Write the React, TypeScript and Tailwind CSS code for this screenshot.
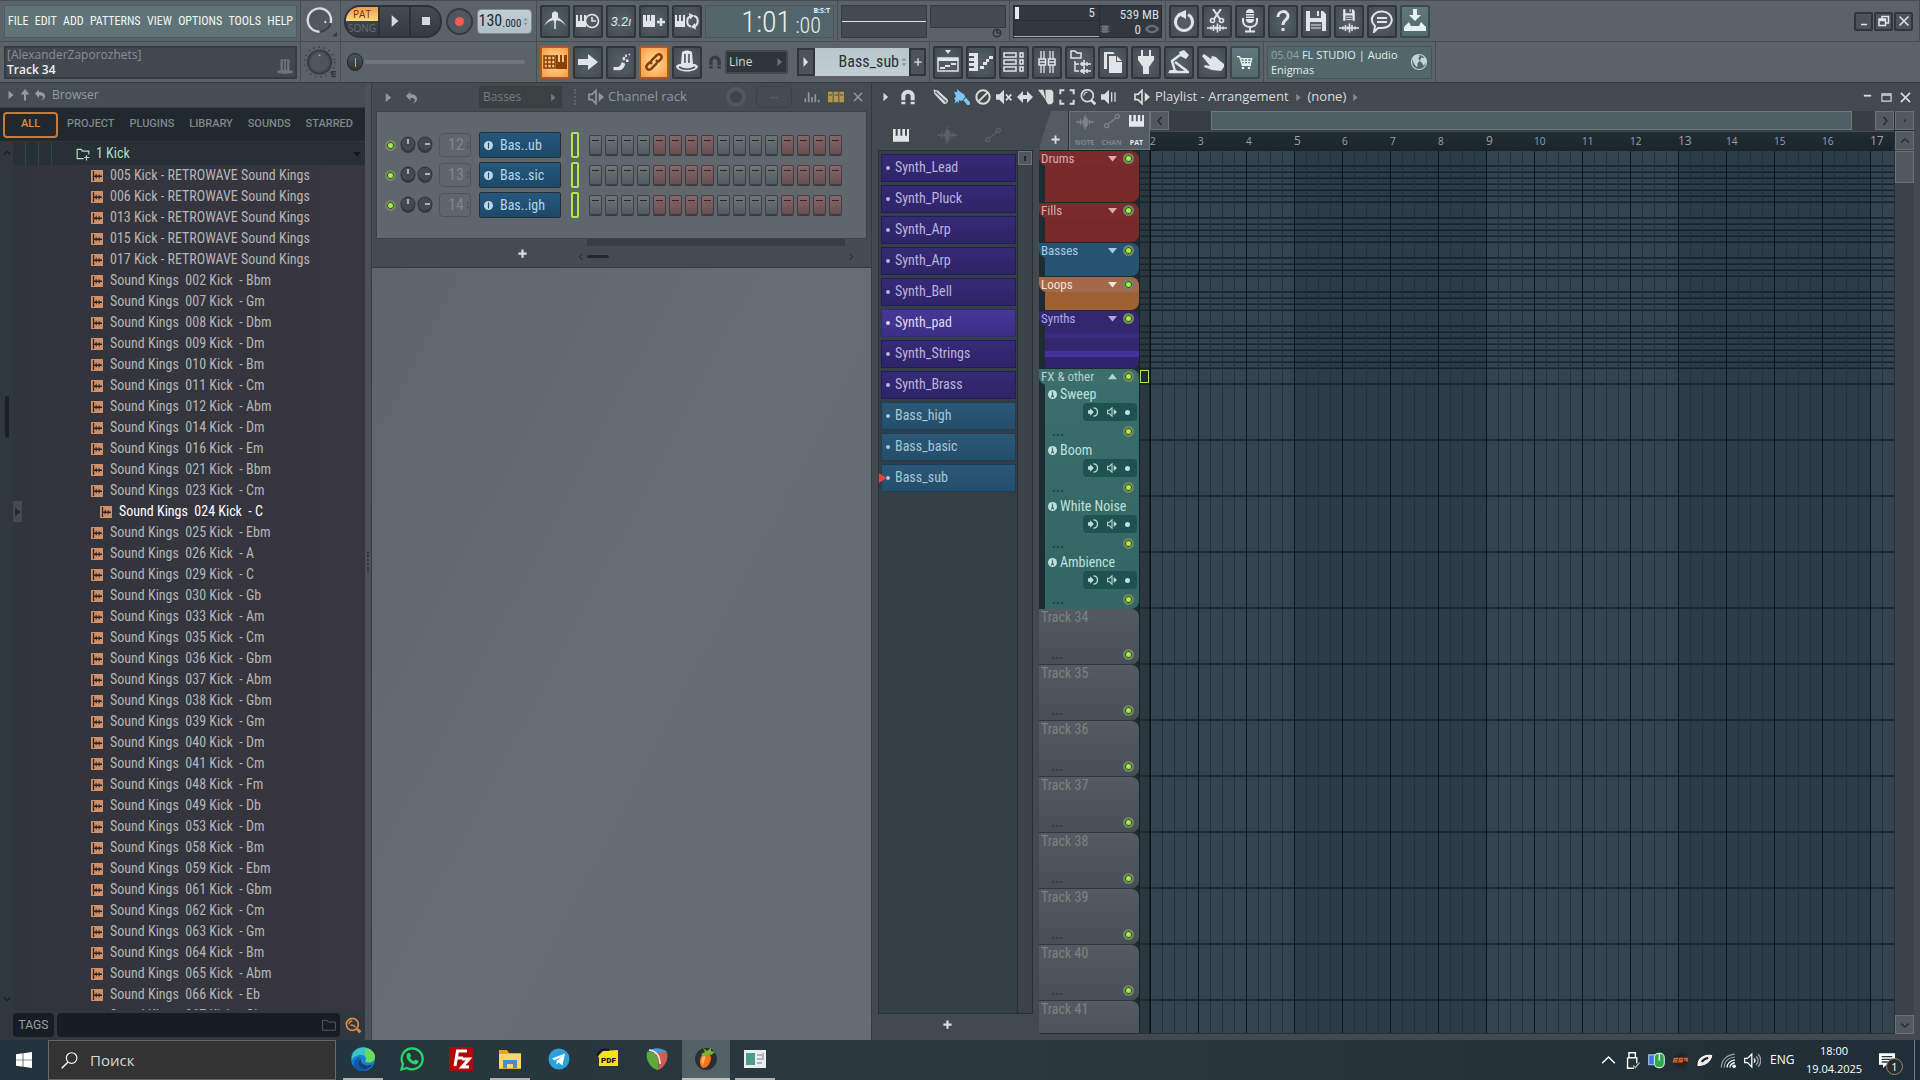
import type { ReactNode } from "react";

const KICKS = [
  "005 Kick - RETROWAVE Sound Kings",
  "006 Kick - RETROWAVE Sound Kings",
  "013 Kick - RETROWAVE Sound Kings",
  "015 Kick - RETROWAVE Sound Kings",
  "017 Kick - RETROWAVE Sound Kings",
  ...[
    ["002", "Bbm"], ["007", "Gm"], ["008", "Dbm"], ["009", "Dm"], ["010", "Bm"], ["011", "Cm"],
    ["012", "Abm"], ["014", "Dm"], ["016", "Em"], ["021", "Bbm"], ["023", "Cm"], ["024", "C"],
    ["025", "Ebm"], ["026", "A"], ["029", "C"], ["030", "Gb"], ["033", "Am"], ["035", "Cm"],
    ["036", "Gbm"], ["037", "Abm"], ["038", "Gbm"], ["039", "Gm"], ["040", "Dm"], ["041", "Cm"],
    ["048", "Fm"], ["049", "Db"], ["053", "Dm"], ["058", "Bm"], ["059", "Ebm"], ["061", "Gbm"],
    ["062", "Cm"], ["063", "Gm"], ["064", "Bm"], ["065", "Abm"], ["066", "Eb"], ["067", "Gb"],
  ].map(([n, key]) => `Sound Kings  ${n} Kick  - ${key}`),
];

const SELECTED_KICK = "Sound Kings  024 Kick  - C";

const CHANNELS = [
  { num: 12, name: "Bas..ub" },
  { num: 13, name: "Bas..sic" },
  { num: 14, name: "Bas..igh" },
];

const SYNTH = "border-[#241b58] bg-linear-to-b from-[#352a75] to-[#2f2468] text-[#b9b3dd]";
const BASS = "border-[#1b3f5a] bg-linear-to-b from-[#2a5876] to-[#234e6c] text-[#a9c6d8]";

const PATTERNS = [
  { name: "Synth_Lead", style: SYNTH },
  { name: "Synth_Pluck", style: SYNTH },
  { name: "Synth_Arp", style: SYNTH },
  { name: "Synth_Arp", style: SYNTH },
  { name: "Synth_Bell", style: SYNTH },
  { name: "Synth_pad", style: "border-[#32287c] bg-linear-to-b from-[#463795] to-[#3c2f88] text-[#dcd8f4]" },
  { name: "Synth_Strings", style: SYNTH },
  { name: "Synth_Brass", style: SYNTH },
  { name: "Bass_high", style: BASS },
  { name: "Bass_basic", style: BASS },
  { name: "Bass_sub", style: BASS },
];

const CURRENT_PATTERN = "Bass_sub";

// Collapsed groups: a 16px header lane and one thin lane for each hidden track
const GROUPS = [
  { name: "Drums", height: "h-[52px]", head: "bg-[#7a2b2c]", body: "bg-[#782929]", text: "text-[#dcaaaa]" },
  { name: "Fills", height: "h-[40px]", head: "bg-[#7a2b2c]", body: "bg-[#782929]", text: "text-[#dcaaaa]" },
  { name: "Basses", height: "h-[34px]", head: "bg-[#265372]", body: "bg-[#255473]", text: "text-[#a9cbe0]" },
  { name: "Loops", height: "h-[34px]", head: "bg-[#a2694a]", body: "bg-[#9f6034]", text: "text-[#f4e2d6]" },
  { name: "Synths", height: "h-[58px]", head: "bg-[#33276f]", body: "bg-[linear-gradient(#33276f_0_7px,#382c80_7px_12px,#33276f_12px_25px,#42349a_25px_31px,#302470_31px)]", text: "text-[#b0a8dc]" },
];

const FX_TRACKS = ["Sweep", "Boom", "White Noise", "Ambience"];
const EMPTY_TRACKS = [34, 35, 36, 37, 38, 39, 40, 41];
const LAST_TRACK = 41;
const BARS = [2, 3, 4, 5, 6, 7, 8, 9, 10, 11, 12, 13, 14, 15, 16, 17];
const STEPS = Array.from({ length: 16 }, (_, i) => i);

const narrow = "font-['Roboto_Condensed',sans-serif]";

function Icon({ children, className = "size-6" }: { children: ReactNode; className?: string }) {
  return (
    <svg viewBox="0 0 24 24" className={`shrink-0 ${className}`} fill="none" stroke="currentColor" strokeWidth="1.6" aria-hidden="true">
      {children}
    </svg>
  );
}

const fill = { fill: "currentColor", stroke: "none" };

const WaveIcon = ({ className }: { className?: string }) => (
  <Icon className={className}><path strokeWidth="1.600" d="M0 12h24M3 10.500v3M6 8v8M9 10v4M12 2v20M15 7v10M10.500 6v12M13.500 5v14M18 9v6M21 10.500v3" /></Icon>
);
const AutomationIcon = ({ className }: { className?: string }) => (
  <Icon className={className}><circle cx="4" cy="19" r="3" strokeWidth="2" /><circle cx="20" cy="5" r="3" strokeWidth="2" /><path strokeWidth="2" d="M6 17L18 7" /></Icon>
);
const KeysIcon = ({ className }: { className?: string }) => (
  <Icon className={className}><path {...fill} d="M0 3h4v10h3V3h4v10h3V3h4v10h3V3h3v19H0z" /></Icon>
);
const SpeakerIcon = ({ className }: { className?: string }) => (
  <Icon className={className}><path strokeWidth="2.500" d="M1.500 8h4.500L12 2v20l-6-6H1.500z" /><path {...fill} d="M16 5l8 7-8 7z" /></Icon>
);
const MagnetIcon = ({ className }: { className?: string }) => (
  <Icon className={className}><path strokeWidth="6" d="M5 17v-6a7 7 0 0 1 14 0V17" /><path {...fill} d="M2 19h6v4H2zM16 19h6v4h-6z" /></Icon>
);
const UndoIcon = ({ className }: { className?: string }) => (
  <Icon className={className}><path {...fill} d="M2 9l8-8v5c8 0 13 3 12 10-1 4-4 6-8 7 3-3 5-5 4-7-1-2-3-3-8-3v5z" /></Icon>
);
const CloseIcon = ({ className }: { className?: string }) => (
  <Icon className={className}><path strokeWidth="3.500" d="M2 2l20 20M22 2L2 22" /></Icon>
);

const FLOPPY = "M2 2h17l3 3v17H2zm4 0v7h11V2h-2v5h-2V2zM6 13v9h12v-9z";
const SMALL_WAVE = "M2 19h20M6 17.500v3M8.500 16v6M11 17.500v3M12.500 14.500v9M15 16v6M18 17.500v3";

function ToolButton({ label, children, active, tint }: { label: string; children: ReactNode; active?: boolean; tint?: boolean }) {
  const look = active
    ? "border-[#a85a20] bg-[radial-gradient(#ffe09a,#f79a45)] text-[#8a3f08]"
    : tint
      ? "border-[#3a4b50] bg-linear-to-b from-[#60787b] to-[#536a6d] text-[#e6f1f1]"
      : "border-[#2f373d] bg-[radial-gradient(#566067,#434c53)] text-[#dfe5e8]";
  return (
    <button type="button" aria-label={label} className={`flex h-[33px] w-[30px] shrink-0 items-center justify-center rounded-xs border-2 ${look}`}>
      {children}
    </button>
  );
}

function Led() {
  return <button type="button" aria-label="Mute" className="size-[11px] shrink-0 rounded-full border-2 border-[#75826c] bg-[#a5ec4a] shadow-[inset_0_0_0_1px_#2f4a1c]" />;
}

function Section({ children, className = "" }: { children?: ReactNode; className?: string }) {
  return <div className={`flex shrink-0 items-center gap-[3px] border-r border-[#454e55] px-[3px] ${className}`}>{children}</div>;
}

function Toolbar() {
  return (
    <header className="shrink-0 border-t border-b border-t-[#454e55] border-b-[#343b41] bg-[#5b6369]">
      <div className="flex h-[41px] border-b border-[#454e55]">
        <Section className="w-[301px]">
          <nav className={`ml-px flex h-[33px] flex-1 items-center justify-between border border-[#4a5c5f] bg-[#607376] px-[3px] text-[12px] text-[#f2f8f8] ${narrow}`}>
            {["FILE", "EDIT", "ADD", "PATTERNS", "VIEW", "OPTIONS", "TOOLS", "HELP"].map((m) => (
              <button key={m} type="button">{m}</button>
            ))}
          </nav>
        </Section>
        <Section className="w-[40px]">
          <svg viewBox="0 0 34 34" className="size-[34px]" aria-label="Master volume">
            <circle cx="16" cy="16" r="12" fill="#50585f" stroke="#3a4248" strokeWidth="2" />
            <path d="M16 28A12 12 0 1 1 27.500 19" fill="none" stroke="#d5dde1" strokeWidth="2.500" />
            <circle cx="22" cy="18" r="1.200" fill="#cfd8dc" />
            <path d="M34 28v5h-5z" fill="#343b41" />
          </svg>
        </Section>
        <Section className="w-[196px]">
          <div className="flex h-[33px] w-[98px] shrink-0 overflow-hidden rounded-2xl border-2 border-[#2c3338] bg-linear-to-b from-[#444c53] to-[#343c43]">
            <div className="flex w-[32px] flex-col font-['Open_Sans',sans-serif] text-[10px] leading-[14px]">
              <button type="button" className="bg-linear-to-b from-[#f79a45] to-[#ffd98a] text-[#6b3410]">PAT</button>
              <button type="button" className="text-[#656d74]">SONG</button>
            </div>
            <button type="button" aria-label="Play" className="flex flex-1 items-center justify-center border-x-2 border-[#2c3338] text-[#d4dade]">
              <Icon className="size-4"><path {...fill} d="M7 3l10 9-10 9z" /></Icon>
            </button>
            <button type="button" aria-label="Stop" className="flex flex-1 items-center justify-center">
              <span className="size-2 bg-[#d4dade]" />
            </button>
          </div>
          <button type="button" aria-label="Record" className="mx-px flex size-[27px] shrink-0 items-center justify-center rounded-full border-2 border-[#333b41] bg-[#50585f]">
            <span className="size-[9px] rounded-full bg-[#ff5a4f]" />
          </button>
          <div className={`flex h-[25px] w-[55px] shrink-0 items-center justify-center rounded-sm border border-[#7d8a90] bg-linear-to-b from-[#c3ced5] to-[#b1bfc7] text-[#23292d] ${narrow}`}>
            <span className="text-[16px] leading-none">130</span>
            <span className="pt-1 text-[11px] leading-none">.000</span>
            <Icon className="size-[9px] text-[#8a979e]"><path {...fill} d="M6 9l6-7 6 7zM6 15l6 7 6-7z" /></Icon>
          </div>
        </Section>
        <Section>
          <ToolButton label="Metronome">
            <Icon><path d="M1 17C4 11 9 8 12 8s8 3 11 9c-3-4-7-6-11-6s-8 2-11 6z" {...fill} /><path {...fill} d="M9 4l3-2 3 2v6l-3 3-3-3z" /><path d="M12 10v10" /></Icon>
          </ToolButton>
          <ToolButton label="Wait for input">
            <Icon><path {...fill} d="M0 6h2v6h2V6h2v6h2V6h2v12H0z" /><circle cx="16" cy="12" r="6.500" fill="#4f585f" /><path d="M16 8v4h4" /></Icon>
          </ToolButton>
          <ToolButton label="Countdown">
            <span className="font-['Roboto',sans-serif] text-[13px] leading-none italic">3.2ı</span>
          </ToolButton>
          <ToolButton label="Blend recording">
            <Icon><path {...fill} d="M1 6h3v6h1V6h3v6h1V6h4v12H1z" /><path strokeWidth="2.500" d="M15 13h8M19 9v8" /></Icon>
          </ToolButton>
          <ToolButton label="Loop recording">
            <Icon><path {...fill} d="M0 6h2v6h2V6h2v6h2V6h2v12H0z" /><path strokeWidth="2" d="M16 17.500c-5-1-5-9 0-10.500M19 7c5 1 5 9 0 10.500" /><path {...fill} d="M14 4l5 2.500-4 4zM21 20.500l-5-2.500 4-4z" /></Icon>
          </ToolButton>
          <div className={`relative flex h-[33px] w-[129px] items-end justify-end border border-[#45575b] bg-[#51656a] pr-3 pb-px font-light text-[#e5f1f1] ${narrow}`}>
            <span className="text-[30px] leading-7">1:01</span>
            <span className="pl-1 text-[22px] leading-5">:00</span>
            <span className="absolute top-px right-[3px] font-['Open_Sans',sans-serif] text-[7px] leading-[7px] font-bold">B:S:T</span>
          </div>
        </Section>
        <Section>
          <div className="flex h-[33px] w-[86px] items-center border border-[#343c42] bg-[#434a50]"><span className="h-px w-full bg-[#dce5e8]" /></div>
          <div className="flex h-[33px] w-[76px] flex-col items-end">
            <div className="h-[23px] w-full border border-[#343c42] bg-[#434a50]" />
            <Icon className="mr-1 size-[10px] text-[#31383d]"><circle cx="12" cy="12" r="9" strokeWidth="4" /><path strokeWidth="4" d="M12 4v8h7" /></Icon>
          </div>
        </Section>
        <Section>
          <div className={`flex h-[33px] w-[149px] border border-[#272e33] bg-[#31393f] text-[13px] text-[#d6dee2] ${narrow}`}>
            <div className="flex w-[86px] flex-col border-r border-[#272e33]">
              <div className="flex h-[15px] items-center justify-between border-b border-[#272e33] pr-1 pl-px">
                <span className="h-3 w-1 bg-[#e4e9eb]" />
                <span className="leading-none">5</span>
              </div>
              <div className="mt-auto h-px bg-[#a9b1b5]" />
            </div>
            <div className="flex flex-1 flex-col justify-between py-px pr-0.5 text-right leading-[15px]">
              <span>539 MB</span>
              <span className="flex items-center justify-end gap-1">
                <Icon className="mr-auto size-[10px] text-[#656e74]"><path {...fill} d="M5 3h14v18H5zM1 5h22v2H1zM1 11h22v2H1zM1 17h22v2H1z" /></Icon>
                0
                <Icon className="size-[14px] text-[#656e74]"><path strokeWidth="4" d="M2 12c5-7 15-7 20 0-5 7-15 7-20 0z" /></Icon>
              </span>
            </div>
          </div>
        </Section>
        <div className="flex flex-1 items-center gap-[3px] border-r border-[#454e55] px-[3px]">
          <ToolButton label="Undo"><Icon><path strokeWidth="3" d="M8 5.500a8.500 8.500 0 1 0 8 0" /><path {...fill} d="M5 5l9-4v9z" /></Icon></ToolButton>
          <ToolButton label="Cut">
            <Icon><path d="M8 0l7 10M16 0L9 10" strokeWidth="2" /><circle cx="7.500" cy="11.500" r="2" /><circle cx="16.500" cy="11.500" r="2" /><path d={SMALL_WAVE} /></Icon>
          </ToolButton>
          <ToolButton label="Record audio">
            <Icon><rect {...fill} x="8" y="0" width="8" height="14" rx="4" /><path d="M5 9v3c0 8 14 8 14 0V9M12 18v4M7 22.500h10" strokeWidth="2" /><path stroke="#4b545b" strokeWidth="1" d="M8 4.500h8M8 7h8M8 9.500h8" /></Icon>
          </ToolButton>
          <ToolButton label="Help"><Icon><path strokeWidth="3" d="M7 8c0-7 10-7 10-1 0 4-5 4-5 9" /><path {...fill} d="M10.500 19h3v3h-3z" /></Icon></ToolButton>
          <ToolButton label="Save"><Icon><path {...fill} fillRule="evenodd" d={FLOPPY} /><path d="M7 16h10M7 19h10" strokeWidth="1.200" /></Icon></ToolButton>
          <ToolButton label="Render">
            <Icon><g transform="translate(5 -1) scale(.58)"><path {...fill} fillRule="evenodd" d={FLOPPY} /><path d="M7 16h10M7 20h10" /></g><path d={SMALL_WAVE} /></Icon>
          </ToolButton>
          <ToolButton label="Chat"><Icon><path strokeWidth="2" d="M8 19l-4 4 1-6C-2 10 4 2.500 12 2.500c12 0 14 16 0 16.500zM7 9h10M7 13h10" /></Icon></ToolButton>
          <ToolButton label="Download" tint><Icon><path {...fill} d="M10 0h4v6h4l-6 6-6-6h4zM1 18l5-5 2 4h8l2-4 5 5v4H1z" /></Icon></ToolButton>
          <div className="mr-[3px] ml-auto flex gap-px text-[#dfe5e8]">
            {[
              ["Minimize", "M6 19h12"],
              ["Restore", "M2 8h13v13H2zM2 11h13M8 8V3h13v13h-6"],
              ["Close", "M3 3l18 18M21 3L3 21"],
            ].map(([label, d]) => (
              <button key={label} type="button" aria-label={label} className="flex size-[19px] items-center justify-center rounded-xs border-2 border-[#2f373d] bg-[#4b545b]">
                <Icon className="size-[12px]"><path strokeWidth="3" d={d} /></Icon>
              </button>
            ))}
          </div>
        </div>
      </div>

      <div className="flex h-[40px]">
        <Section className="w-[301px]">
          <div className="ml-px flex h-[33px] flex-1 items-end justify-between border-2 border-[#353d43] bg-[#41484f] px-px font-['Open_Sans',sans-serif] text-[12px] leading-[15px]">
            <div>
              <p className="text-[#868f95]">[AlexanderZaporozhets]</p>
              <p className="font-semibold text-[#eef1f3]">Track 34</p>
            </div>
            <Icon className="mb-0.5 size-[18px] text-[#6b747a]"><path {...fill} d="M6 3h12v15h4v3c-5 2-15 2-20 0v-3h4z" /><path stroke="#41484f" d="M10 5v12M14 5v12" /></Icon>
          </div>
        </Section>
        <Section className="w-[40px]">
          <svg viewBox="0 0 34 34" className="size-[34px]" aria-label="Master pitch">
            <circle cx="16" cy="17" r="15.500" fill="none" stroke="#3f474d" strokeWidth="2" strokeDasharray="1.500 4" />
            <circle cx="16" cy="17" r="12" fill="#454d54" stroke="#363e44" strokeWidth="2" />
            <circle cx="16" cy="17" r="9.500" fill="#4e565d" />
            <circle cx="16" cy="10" r="1" fill="#9aa6ac" />
            <path d="M33 32h-4v-5h4M29 29.500h4" fill="none" stroke="#31383d" strokeWidth="1.500" />
          </svg>
        </Section>
        <Section className="w-[196px]">
          <div className="relative mr-2 ml-5 h-1 flex-1 rounded-full bg-[#6e777d]">
            <span className="absolute top-[-7px] left-[-17px] flex h-[18px] w-4 items-center justify-center rounded-full border border-[#23292d] bg-linear-to-b from-[#4b545b] to-[#2f363b]">
              <span className="h-[9px] w-px bg-[#ee9a55]" />
            </span>
          </div>
        </Section>
        <Section>
          <ToolButton label="Typing keyboard to piano" active>
            <Icon><path strokeWidth="1.500" d="M1 6h11v12H1zM1 10h11M1 14h11M4.500 6v12M8.500 6v12" /><path {...fill} d="M13 5h2v7h2V5h2v7h2V5h3v14H13z" /></Icon>
          </ToolButton>
          <ToolButton label="Step edit"><Icon><path {...fill} d="M2 9h10V4l10 8-10 8v-5H2z" /></Icon></ToolButton>
          <ToolButton label="Slide"><Icon className="size-5"><path {...fill} d="M3 18h4c4 0 5-3 6-6l4 2c-1 5-4 8-9 8H3zM14 6h3v4h-3zM18 9h3v3h-3zM17 3h2v3h-2zM21 2h2v2h-2z" /></Icon></ToolButton>
          <ToolButton label="Link controllers" active>
            <Icon><path strokeWidth="2.500" d="M10 14c-2-2-1-3 0-4l5-5c3-2 6 1 4 4l-3 3M14 10c2 2 1 3 0 4l-5 5c-3 2-6-1-4-4l3-3" /></Icon>
          </ToolButton>
          <ToolButton label="Multilink"><Icon><path {...fill} d="M7 2c3-2 7-2 10 0l1 12c4 0 5 2 5 3-3 6-19 6-22 0 0-1 1-3 5-3z" /><path stroke="#4b545b" d="M10 4v9M14 4v9M4 17c4 3 12 3 16 0" /></Icon></ToolButton>
          <MagnetIcon className="ml-[3px] size-[14px] text-[#363e44]" />
          <button type="button" className="flex h-[24px] w-[63px] items-center justify-between rounded-xs border-2 border-[#42494f] bg-[#2f363b] pl-0.5 font-['Open_Sans',sans-serif] text-[12px] text-[#cfd7db]">
            Line
            <Icon className="size-3 text-[#6b747a]"><path {...fill} d="M7 4l9 8-9 8z" /></Icon>
          </button>
          <div className="ml-1.5 flex h-[28px]">
            <button type="button" aria-label="Pattern menu" className="flex w-[18px] items-center justify-center border-2 border-[#2f373d] bg-[#4b545b] text-[#dfe5e8]">
              <Icon className="size-3"><path {...fill} d="M7 2l9 10-9 10z" /></Icon>
            </button>
            <button type="button" className={`flex w-[94px] items-center justify-end bg-linear-to-b from-[#b8c6ce] to-[#c2ced4] text-[16px] text-[#2a3136] ${narrow}`}>
              Bass_sub
              <Icon className="size-[10px] text-[#8a979e]"><path {...fill} d="M6 9l6-7 6 7zM6 15l6 7 6-7z" /></Icon>
            </button>
            <button type="button" aria-label="Add pattern" className="flex w-[17px] items-center justify-center border-2 border-[#2f373d] bg-[#4b545b] text-[#dfe5e8]">
              <Icon className="size-2.5"><path strokeWidth="3" d="M12 3v18M3 12h18" /></Icon>
            </button>
          </div>
        </Section>
        <Section>
          <ToolButton label="Playlist"><Icon><path {...fill} d="M9 0h6l-3 4z" /><path strokeWidth="1.500" d="M2 8h20v13H2z" /><path {...fill} d="M2 8h20v3H2zM4 17h5v2H4zM9 15h5v2H9zM15 13h5v2h-5z" /></Icon></ToolButton>
          <ToolButton label="Piano roll"><Icon><path {...fill} d="M0 3h9v18H0v-3h5v-2H0v-3h5v-2H0V8h5V6H0zM11 16h4v3h-4zM14 12h4v3h-4zM17 9h3v3h-3zM20 6h4v3h-4z" /></Icon></ToolButton>
          <ToolButton label="Channel rack"><Icon><path strokeWidth="1.500" d="M2 3h12v4H2zM2 10h12v4H2zM2 17h12v4H2zM18 3h3v4h-3zM18 10h3v4h-3zM18 17h3v4h-3z" /></Icon></ToolButton>
          <ToolButton label="Mixer"><Icon><path strokeWidth="1.300" d="M6 1v8M9 1v8M6 15v8M9 15v8M15 1v8M18 1v8M15 15v8M18 15v8" /><path strokeWidth="1.500" d="M4 9h6.500v6H4zM13.500 9H20v6h-6.500zM4 12h7M13 12h7" /></Icon></ToolButton>
          <ToolButton label="Browser"><Icon><path strokeWidth="1.500" d="M3 8V1h4l2 2h4v5zM7 11v10h4M7 14h4" /><path d="M12 14h11M14 12v4M16 10v8M19 12v4M12 21h11M14 19v4M16 18v6M19 19v4" /></Icon></ToolButton>
          <ToolButton label="Project info"><Icon><path {...fill} d="M8 6h7v6h6v11H8zM16 6l5 5h-5z" /><path {...fill} d="M3 2h9l2 2H6v15H3z" /></Icon></ToolButton>
          <ToolButton label="Plugin picker"><Icon><path {...fill} d="M7 0h2v6h6V0h2v6h3v4l-5 7v7H9v-7l-5-7V6h3z" /></Icon></ToolButton>
          <ToolButton label="Tempo tapper"><Icon><path strokeWidth="2.500" d="M13 5L5 11l3 10M8 12l12 9M2 22h20" /><path {...fill} d="M12 2l5-2 5 5-3 4-6-3zM3 20h7v3H1z" /></Icon></ToolButton>
          <ToolButton label="Touch"><Icon><path {...fill} d="M2 6l2-2 7 5 1-3 4 1 3 3 5 4v3l-3 4-9-1-8-3 1-2 5 1z" /></Icon></ToolButton>
          <ToolButton label="Shop" tint><Icon className="size-[16px]"><path strokeWidth="2" d="M0 4h4l4 13h13M5 7h17l-2 8H7M11 7v8M16 7v8M6 11h15" /><circle {...fill} cx="9" cy="21" r="2" /><circle {...fill} cx="18" cy="21" r="2" /></Icon></ToolButton>
        </Section>
        <Section>
          <a href="#news" className="flex h-[33px] w-[165px] items-center justify-between border border-[#41565a] bg-[#526769] px-[3px] font-['Open_Sans',sans-serif] text-[11px] leading-[15px] whitespace-pre-line text-[#e1ecec]">
            <span><span className="text-[#93a3a5]">05.04</span>{"  FL STUDIO | Audio\nEnigmas"}</span>
            <Icon className="size-[18px] text-[#c3d4d6]"><circle cx="12" cy="12" r="10" /><path {...fill} d="M4 5c3-3 8-3 9-1l-2 3 2 3-3 4v5C6 17 3 12 4 5zM15 6l6 1c2 4 0 8-3 10l-2-4-3-2z" /></Icon>
          </a>
        </Section>
      </div>
    </header>
  );
}

function Browser() {
  return (
    <aside className="flex w-[365px] shrink-0 flex-col bg-[#2f383e]">
      <div className="flex h-[25px] shrink-0 items-center border-b border-[#343c42] bg-[#454e54] pl-1.5 font-['Open_Sans',sans-serif] text-[12px] text-[#939ca1]">
        <Icon className="size-[10px]"><path {...fill} d="M6 2l12 10L6 22z" /></Icon>
        <Icon className="ml-[3px] size-3"><path strokeWidth="4" d="M12 23V6" /><path {...fill} d="M12 0l9 11H3z" /></Icon>
        <UndoIcon className="mr-1.5 ml-[3px] size-3" />
        Browser
      </div>
      <div className="flex h-[33px] shrink-0 items-center gap-[3px] bg-[#20292e] pl-[3px] font-['Roboto',sans-serif] text-[11px] font-medium text-[#7f878b]">
        <button type="button" className="h-[26px] w-[55px] rounded-sm border-2 border-[#c77c3c] text-[#e08a42]">ALL</button>
        <div className="flex flex-1 justify-between px-1.5 pr-3">
          {["PROJECT", "PLUGINS", "LIBRARY", "SOUNDS", "STARRED"].map((t) => (
            <button key={t} type="button">{t}</button>
          ))}
        </div>
      </div>
      <div className="flex min-h-0 flex-1 pt-px">
        <div className="flex w-[13px] shrink-0 flex-col items-center justify-between py-1.5 text-[#171d21]">
          <Icon className="size-2.5"><path strokeWidth="3" d="M4 16l8-8 8 8" /></Icon>
          <span className="mb-[318px] h-[42px] w-1 rounded-full bg-[#1a2125]" />
          <Icon className="size-2.5"><path strokeWidth="3" d="M4 8l8 8 8-8" /></Icon>
        </div>
        <div className={`relative min-w-0 flex-1 overflow-hidden bg-linear-to-r from-[#32343b] to-[#38363f] text-[14px] text-[#b4b6b8] ${narrow}`}>
          <button type="button" className="flex h-[23px] w-full items-center bg-[#263035] text-[#b3dcc3]">
            <span className="mr-5 h-full w-[43px] bg-[repeating-linear-gradient(90deg,transparent_0_12px,#37434a_12px_13px)]" />
            <Icon className="mr-1.5 size-[14px]"><path strokeWidth="2" d="M13 20H2V4h7l2 3h11v6M18 14v9M14 18h9" /></Icon>
            1 Kick
            <Icon className="mr-1 ml-auto size-2 text-[#12181b]"><path {...fill} d="M0 6h24L12 20z" /></Icon>
          </button>
          <ul>
            {KICKS.map((name) => (
              <li
                key={name}
                className={
                  name === SELECTED_KICK
                    ? "flex h-[21px] items-center gap-[7px] pl-[87px] whitespace-pre text-white"
                    : "flex h-[21px] items-center gap-[7px] pl-[78px] whitespace-pre"
                }
              >
                <Icon className="size-3 bg-[#cf9069] text-[#2a2320]"><path strokeWidth="2.500" d="M5 2v20" /><path {...fill} d="M5 11h4l1-5 2 5 3 0 1-4 2 4h4v3h-4l-2 4-1-4h-3l-2 4-1-4H5z" /></Icon>
                {name}
              </li>
            ))}
          </ul>
          <button type="button" aria-label="Expand" className="absolute top-[359px] left-0 flex h-[21px] w-[9px] items-center justify-center bg-[#484950] text-[#22252a]">
            <Icon className="size-2"><path {...fill} d="M4 0l16 12L4 24z" /></Icon>
          </button>
        </div>
      </div>
      <div className="flex shrink-0 items-center gap-[3px] py-[3px] pr-1 pl-[13px]">
        <button type="button" className="h-[24px] w-[41px] rounded-sm bg-[#161e23] font-['Roboto',sans-serif] text-[12px] text-[#99a1a4]">TAGS</button>
        <div className="flex h-[24px] flex-1 items-center rounded-sm bg-[#161e23] pr-1">
          <input type="text" aria-label="Search tags" className="min-w-0 flex-1 bg-transparent px-1 text-[12px] text-[#b4b6b8] outline-none" />
          <Icon className="size-[14px] text-[#545d62]"><path d="M1 4h8l2 3h12v14H1z" /></Icon>
        </div>
        <button type="button" aria-label="Search" className="ml-0.5 text-[#e08a42]">
          <Icon className="size-[16px]"><circle cx="11" cy="11" r="9" strokeWidth="2.500" /><path strokeWidth="2" d="M6 11c0-3 2-5 5-5M8 12c3 0 6 1 8 3" /><path strokeWidth="4" d="M18 18l5 5" /></Icon>
        </button>
      </div>
    </aside>
  );
}

function Knob({ turned }: { turned?: boolean }) {
  return (
    <svg viewBox="0 0 16 18" className="h-[18px] w-4 shrink-0" aria-hidden="true">
      <circle cx="8" cy="10" r="7" fill="#343b41" />
      <circle cx="8" cy="8" r="7" fill="#434b51" stroke="#2c3338" />
      <path d={turned ? "M8 8h5" : "M8 8V3"} stroke="#ccd4d8" strokeWidth="1.500" />
    </svg>
  );
}

function ChannelRack() {
  return (
    <section className="flex h-[185px] shrink-0 flex-col border-b border-[#333b41] bg-[#444c52] px-1">
      <div className="flex h-[28px] items-center pr-1 pl-[7px] font-['Open_Sans',sans-serif] text-[13px] text-[#8f989d]">
        <Icon className="size-[11px]"><path {...fill} d="M6 2l12 10L6 22z" /></Icon>
        <UndoIcon className="mr-[61px] ml-[11px] size-[13px]" />
        <button type="button" className="flex h-[22px] w-[83px] items-center justify-between rounded-xs border border-[#363e42] bg-[#394143] pr-0.5 pl-[3px] text-[12px] text-[#737c80]">
          Basses
          <Icon className="size-[11px]"><path {...fill} d="M7 4l9 8-9 8z" /></Icon>
        </button>
        <span className="mr-3 ml-3 h-4 border-l-2 border-dotted border-[#5d666c]" />
        <SpeakerIcon className="mr-1 size-4" />
        Channel rack
        <span className="ml-auto size-[20px] rounded-full border-4 border-[#50585e] bg-[#3e464c]" />
        <span className="mr-3 ml-2.5 flex h-[22px] w-[36px] items-center justify-center rounded-md border border-[#3a4247] text-[10px] text-[#6d767b]">···</span>
        <Icon className="size-4"><path strokeWidth="2.500" d="M2 20v-6M7 20V5M12 20v-8M17 20V8M22 20v-4" /></Icon>
        <Icon className="ml-2 size-4 text-[#b5964a]"><path {...fill} d="M0 4h7v16H0zM8.500 4h7v16h-7zM17 4h7v16h-7z" /><path stroke="#444c52" d="M1 9h5M10 9h5M18 9h5" /></Icon>
        <CloseIcon className="ml-[9px] size-[10px]" />
      </div>
      <div className="flex h-[128px] flex-col justify-center gap-1 border border-[#3a4348] bg-[#5f676c]">
        {CHANNELS.map((ch) => (
          <div key={ch.num} className="flex h-[26px] items-center pl-2">
            <Led />
            <span className="ml-1 flex gap-px"><Knob /><Knob turned /></span>
            <button type="button" className={`ml-1.5 flex h-[24px] w-8 items-center justify-between rounded-sm border border-[#4d555b] pr-0.5 pl-2 text-[16px] text-[#7f878c] ${narrow}`}>
              {ch.num}
              <Icon className="size-2 text-[#4d555b]"><path strokeWidth="3" d="M8 1l8 5-8 4M16 14l-8 4 8 5" /></Icon>
            </button>
            <button type="button" className={`ml-2 flex h-[26px] w-[82px] items-center gap-[7px] rounded-xs border border-[#223039] bg-linear-to-b from-[#24587c] to-[#1d486a] pl-1 text-[14px] text-[#b9d6e6] ${narrow}`}>
              <Icon className="size-[9px]"><circle {...fill} cx="12" cy="12" r="12" /><path stroke="#1d486a" strokeWidth="3" d="M12 4v16" /></Icon>
              {ch.name}
            </button>
            <button type="button" aria-label="Select channel" className="ml-[10px] h-[26px] w-[8px] rounded-xs border-2 border-[#aaea45] bg-[#525a5f]" />
            <div className="ml-[10px] flex gap-[3px]">
              {STEPS.map((i) => (
                <button
                  key={i}
                  type="button"
                  aria-label={`Step ${i + 1}`}
                  className={
                    i % 8 < 4
                      ? "flex h-[20px] w-[13px] justify-center rounded-xs border border-[#3a4247] bg-linear-to-b from-[#6f777b] to-[#525a5f] pt-1 shadow-[0_1px_0_#343b40]"
                      : "flex h-[20px] w-[13px] justify-center rounded-xs border border-[#49393c] bg-linear-to-b from-[#876869] to-[#654f51] pt-1 shadow-[0_1px_0_#343b40]"
                  }
                >
                  <span className="h-px w-[7px] bg-[#252b2f]" />
                </button>
              ))}
            </div>
          </div>
        ))}
      </div>
      <div className="flex flex-1 text-[#d6dde0]">
        <button type="button" aria-label="Add channel" className="ml-[142px] flex w-[16px] items-center">
          <Icon className="size-[9px]"><path strokeWidth="6" d="M12 1v22M1 12h22" /></Icon>
        </button>
        <div className="ml-[43px] flex flex-1 flex-col pr-3">
          <div className="mr-[10px] ml-[10px] h-[7px] bg-[#373f45]" />
          <div className="flex flex-1 items-center text-[#23292d]">
            <Icon className="size-2"><path strokeWidth="3" d="M16 3l-9 9 9 9" /></Icon>
            <span className="ml-0.5 h-[3px] w-[22px] rounded-full bg-[#23292d]" />
            <Icon className="ml-auto size-2"><path strokeWidth="3" d="M8 3l9 9-9 9" /></Icon>
          </div>
        </div>
      </div>
    </section>
  );
}

function Picker() {
  return (
    <div className="flex w-[167px] shrink-0 flex-col px-[6px]">
      <div className="flex h-[39px] shrink-0 items-center gap-[28px] pt-2 pl-[15px] text-[#dfe5e8]">
        <KeysIcon className="size-4" />
        <WaveIcon className="size-5 text-[#596167]" />
        <AutomationIcon className="size-4 text-[#596167]" />
      </div>
      <div className="flex min-h-0 flex-1 border border-[#263035] bg-[#343e45]">
        <ul className="flex flex-1 flex-col gap-[3px] pt-[3px] pr-px pl-[2px]">
          {PATTERNS.map((p, i) => (
            <li key={i} className="relative">
              <button type="button" className={`flex h-[28px] w-full items-center gap-[5px] border pb-px pl-1 text-[14px] ${narrow} ${p.style}`}>
                <span className="size-1 rounded-full bg-current" />
                {p.name}
              </button>
              {p.name === CURRENT_PATTERN && (
                <span className="absolute inset-y-0 left-[-3px] flex items-center text-[#e8413c]">
                  <Icon className="size-2.5"><path {...fill} d="M2 0l18 12L2 24z" /></Icon>
                </span>
              )}
            </li>
          ))}
        </ul>
        <div className="w-[15px] border-l border-[#263035] bg-[#3a4349]">
          <div className="flex h-[14px] items-center justify-center border border-[#697278] bg-[#4f585e]"><span className="h-[5px] w-0.5 bg-[#22292d]" /></div>
        </div>
      </div>
      <button type="button" aria-label="Add pattern" className="flex h-5 shrink-0 items-center justify-center text-[#d6dde0]">
        <Icon className="mr-4 size-[9px]"><path strokeWidth="6" d="M12 1v22M1 12h22" /></Icon>
      </button>
    </div>
  );
}

function TrackList() {
  return (
    <div className={`w-[100px] shrink-0 overflow-hidden bg-[#202b31] text-[13px] ${narrow}`}>
      {GROUPS.map((g) => (
        <div key={g.name} className={`${g.height} flex flex-col pb-px`}>
          <div className={`flex h-[15px] shrink-0 items-center justify-between rounded-tr-lg rounded-bl-lg pr-[5px] pl-[2px] leading-[15px] ${g.head} ${g.text}`}>
            <span className="flex-1">{g.name}</span>
            <Icon className="mr-1.5 size-[9px]"><path {...fill} d="M0 5h24L12 20z" /></Icon>
            <Led />
          </div>
          <div className={`ml-[6px] flex-1 rounded-br-lg ${g.body}`} />
        </div>
      ))}
      <div className="text-[#bfe0da]">
        <div className="flex h-[16px] items-center rounded-tr-lg rounded-bl-lg bg-[#3b6e6d] pr-[5px] pb-px pl-[2px] leading-[15px] text-[#b5d2ce]">
          <span className="flex-1">FX & other</span>
          <Icon className="mr-1.5 size-[9px]"><path {...fill} d="M0 19h24L12 4z" /></Icon>
          <Led />
        </div>
        <div className="ml-[6px] rounded-br-lg bg-linear-to-b from-[#396e6c] to-[#336664]">
          {FX_TRACKS.map((name) => (
            <div key={name} className="flex h-[56px] flex-col pr-[2px] pl-[3px]">
              <div className="flex h-[18px] items-center gap-[3px] text-[14px]">
                <Icon className="size-[9px]"><circle {...fill} cx="12" cy="12" r="12" /><path stroke="#396e6c" strokeWidth="3" d="M12 4v8l-3 8M12 12l3 8" /></Icon>
                {name}
              </div>
              <div className="flex h-[18px] w-[54px] items-center justify-between self-end rounded-sm bg-[#1f5150] px-[5px]">
                <Icon className="size-[10px]"><path {...fill} d="M0 8h5V3l9 9-9 9v-5H0z" /><path strokeWidth="3" d="M13 2c13 1 13 19 0 20" /></Icon>
                <SpeakerIcon className="size-[10px]" />
                <span className="mr-0.5 size-[5px] rounded-full bg-current" />
              </div>
              <div className="flex flex-1 items-center justify-between pr-[3px] pl-[4px]">
                <span className="text-[14px] leading-[20px] font-bold text-[#1f4a49]">...</span>
                <Led />
              </div>
            </div>
          ))}
        </div>
        {EMPTY_TRACKS.map((n) => (
          <div key={n} className="flex h-[56px] flex-col justify-between rounded-r-lg border-b border-[#2e373c] bg-linear-to-b from-[#535b60] to-[#485055] pr-[5px] pl-[2px] text-[14px] text-[#7a8287]">
            <span className="leading-[17px]">Track {n}</span>
            {n !== LAST_TRACK && (
              <div className="flex h-[19px] items-center justify-between pl-2.5">
                <span className="leading-[19px] font-bold text-[#333b40]">...</span>
                <Led />
              </div>
            )}
          </div>
        ))}
      </div>
    </div>
  );
}

function Grid() {
  return (
    <div className="relative min-w-0 flex-1 overflow-hidden bg-[#33444e]">
      {GROUPS.map((g) => (
        <div key={g.name} className={`${g.height} flex flex-col`}>
          <div className="h-[16px] shrink-0 border-b-2 border-[#1a2a33]" />
          <div className="flex-1 bg-[repeating-linear-gradient(transparent_0_4px,#22323b_4px_5px,#16252d_5px_6px)]" />
        </div>
      ))}
      <div className="h-[16px] border-b-2 border-[#1a2a33]" />
      {[...FX_TRACKS, ...EMPTY_TRACKS].map((t) => (
        <div key={t} className="h-[56px] border-b-2 border-[#1a2a33]" />
      ))}
      {/* Dark four-bar blocks, beat lines and bar lines */}
      <div className="pointer-events-none absolute inset-y-0 right-0 left-[11px] bg-[repeating-linear-gradient(90deg,#0b161c_0_1px,transparent_1px_48px),repeating-linear-gradient(90deg,#20313a_0_1px,transparent_1px_12px),repeating-linear-gradient(90deg,transparent_0_144px,#0f1e2633_144px_336px,transparent_336px_384px)]" />
      <div className="pointer-events-none absolute inset-y-0 left-0 w-[11px] border-x border-[#16242c] bg-[#20292e66]" />
      <span className="absolute top-[219px] left-px h-[13px] w-[9px] border border-[#aaea45] bg-[#202b31]" />
    </div>
  );
}

function ScrollButton({ label, d }: { label: string; d: string }) {
  return (
    <button type="button" aria-label={label} className="flex size-[19px] shrink-0 items-center justify-center border border-[#697278] bg-[#515a60] text-[#22292d]">
      <Icon className="size-3"><path strokeWidth="2.500" d={d} /></Icon>
    </button>
  );
}

function Playlist() {
  return (
    <section className="flex min-w-0 flex-1 flex-col border-l border-[#343b41] bg-[#42494f] pb-[6px] text-[#d6dde0]">
      <div className="flex h-[28px] shrink-0 items-center pr-[9px] pl-[9px] font-['Open_Sans',sans-serif] text-[13px]">
        <Icon className="mr-[9px] size-[10px]"><path {...fill} d="M6 2l11 10L6 22z" /></Icon>
        <MagnetIcon className="mr-[17px] size-4" />
        <div className="flex items-center gap-[5px]">
          <Icon className="size-4"><path strokeWidth="2" d="M2 2l5 1 14 13c2 3-2 7-5 5L3 7zM6 4l14 13M4 7l14 13" /></Icon>
          <Icon className="size-4 text-[#7cc5f5]"><path {...fill} d="M0 4l5 1-1-5 5 4 6 4 2 4-5 6-4-1-2 5-1-4-4 4 1-6-2-1 3-4zM14 17l4-4 6 7c1 3-2 5-4 4z" /></Icon>
          <Icon className="size-4"><circle cx="12" cy="12" r="10" strokeWidth="3" /><path strokeWidth="3" d="M5 19L19 5" /></Icon>
          <Icon className="size-4"><path {...fill} d="M0 8h5l7-7v22l-7-7H0z" /><path strokeWidth="2.500" d="M15 8l8 9M23 8l-8 9" /></Icon>
          <Icon className="size-4"><path {...fill} d="M0 12l9-9v6h6V3l9 9-9 9v-6H9v6z" /></Icon>
          <Icon className="size-4"><path {...fill} d="M0 1h8l4 16zM11 1h9l3 3v16l-3 3h-5l-3-5z" /></Icon>
          <Icon className="size-4"><path strokeWidth="3" d="M8 2H2v6M16 2h6v6M8 22H2v-6M16 22h6v-6" /></Icon>
          <Icon className="size-4"><circle cx="11" cy="10" r="9" strokeWidth="2.500" /><path d="M6 10c0-3 2-5 5-5" /><path strokeWidth="4" d="M17 17l6 6" /></Icon>
          <Icon className="size-4"><path {...fill} d="M0 8h5l7-7v22l-7-7H0zM15 5h2v14h-2zM20 5h2v14h-2z" /></Icon>
        </div>
        <SpeakerIcon className="mr-[5px] ml-[17px] size-4" />
        <h1 className="text-[13px]">Playlist - Arrangement</h1>
        <Icon className="mx-[5px] size-[9px] text-[#80898e]"><path {...fill} d="M6 2l12 10L6 22z" /></Icon>
        (none)
        <Icon className="mx-[5px] size-[9px] text-[#80898e]"><path {...fill} d="M6 2l12 10L6 22z" /></Icon>
        <div className="ml-auto flex items-center gap-2">
          <Icon className="size-[11px]"><path strokeWidth="4" d="M4 8h16" /></Icon>
          <Icon className="size-[11px]"><path strokeWidth="2.500" d="M2 4h20v16H2zM2 7h20" /></Icon>
          <CloseIcon className="size-[11px]" />
        </div>
      </div>
      <div className="flex min-h-0 flex-1">
        <Picker />
        <div className="mr-[6px] flex min-w-0 flex-1">
          <div className="flex min-w-0 flex-1 flex-col border-b border-[#263035]">
            <div className="flex h-[39px] shrink-0">
              <button type="button" aria-label="Add track" className="flex w-[30px] items-end justify-center border-r border-[#263035] bg-[#535c62] pb-1.5 pl-1 [clip-path:polygon(40%_0,100%_0,100%_100%,0_100%,10%_70%)]">
                <Icon className="size-[9px]"><path strokeWidth="5" d="M12 1v22M1 12h22" /></Icon>
              </button>
              <div className="flex w-[81px] justify-between border border-[#6a7379] bg-[#535c62] px-[5px] pt-px pb-px font-['Open_Sans',sans-serif] text-[7px] font-bold text-[#7b8489]">
                <button type="button" className="flex flex-col items-center justify-between"><WaveIcon className="size-[18px]" />NOTE</button>
                <button type="button" className="flex flex-col items-center justify-between"><AutomationIcon className="size-4" />CHAN</button>
                <button type="button" className="flex flex-col items-center justify-between text-[#e4eaec]"><KeysIcon className="size-[15px]" />PAT</button>
              </div>
              <div className="flex min-w-0 flex-1 flex-col">
                <div className="flex h-[20px] bg-[#373f45]">
                  <ScrollButton label="Scroll left" d="M15 4l-7 8 7 8" />
                  <div className="mr-[23px] ml-[42px] h-[19px] flex-1 border border-[#697b80] bg-[#4f5f66]" />
                  <ScrollButton label="Scroll right" d="M9 4l7 8-7 8" />
                </div>
                <div className="mt-px flex flex-1 items-center overflow-hidden bg-linear-to-b from-[#212d33] to-[#1b262c] font-['Open_Sans',sans-serif] text-[10px] text-[#98a3a8]">
                  {BARS.map((n) => (
                    <span key={n} className={n % 4 === 1 ? "w-12 shrink-0 text-[12px]" : "w-12 shrink-0"}>{n}</span>
                  ))}
                </div>
              </div>
            </div>
            <div className="flex min-h-0 flex-1 border-t border-[#16242c]">
              <TrackList />
              <Grid />
            </div>
          </div>
          <div className="flex w-[20px] shrink-0 flex-col border-l border-[#263035] bg-[#3a4349]">
            <ScrollButton label="Options" d="M12 9v5" />
            <span className="h-px shrink-0 bg-[#22292d]" />
            <ScrollButton label="Scroll up" d="M4 15l8-7 8 7" />
            <span className="mt-px h-[32px] shrink-0 border border-[#697278] bg-[#515a60]" />
            <span className="flex-1" />
            <ScrollButton label="Scroll down" d="M4 9l8 7 8-7" />
          </div>
        </div>
      </div>
    </section>
  );
}

function Task({ label, children, open, current }: { label: string; children: ReactNode; open?: boolean; current?: boolean }) {
  return (
    <button type="button" aria-label={label} className={current ? "flex w-12 flex-col items-center bg-[#536266]" : "flex w-12 flex-col items-center"}>
      <span className="flex flex-1 items-center">
        <svg viewBox="0 0 24 24" className="size-6" aria-hidden="true">{children}</svg>
      </span>
      <span className={current ? "h-0.5 w-full bg-[#c3bfba]" : open ? "h-0.5 w-10 bg-[#b5b1ad]" : "h-0.5 w-10"} />
    </button>
  );
}

function Taskbar() {
  return (
    <footer className="flex h-[40px] shrink-0 bg-linear-to-r from-[#22333c] via-[#2b393f] to-[#1f2e36] font-['Open_Sans',sans-serif] text-white">
      <button type="button" aria-label="Start" className="flex w-12 items-center justify-center">
        <Icon className="size-4"><path {...fill} d="M0 3.500L10 2v9.500H0zM11 1.800L24 0v11.500H11zM0 12.500h10V22L0 20.500zM11 12.500h13V24l-13-1.800z" /></Icon>
      </button>
      <label className="mr-[3px] flex w-[288px] items-center gap-3 border border-[#6c6a68] bg-[#333333] px-3">
        <Icon className="size-[17px]"><circle cx="15" cy="8.500" r="7.500" /><path strokeWidth="2" d="M10 14L1 23" /></Icon>
        <input type="text" aria-label="Поиск" placeholder="Поиск" className="min-w-0 flex-1 bg-transparent text-[15px] outline-none placeholder:text-[#d8d8d8]" />
      </label>
      <div className="flex gap-px">
        <Task label="Edge" open>
          <circle cx="12" cy="12" r="12" fill="#1b7fd0" />
          <path d="M1 9C3-2 22-3 24 10c0 6-8 7-10 4 2-1 1-6-4-6-4 0-8 2-9 5z" fill="#3cc6c0" />
          <path d="M14 1c7 1 11 6 10 10-1 5-8 5-10 3 2-1 2-4 0-6z" fill="#6bdc57" />
          <path d="M9 10c-4 5 0 12 8 12-8 5-16-1-14-7 1-3 4-5 6-5z" fill="#0f5aa8" />
          <path d="M10 11c-2 5 5 10 12 6-3 5-8 6-11 4-5-3-4-8-1-10z" fill="#173f74" />
        </Task>
        <Task label="WhatsApp">
          <path d="M1.500 22.500L3 17A10.500 10.500 0 1 1 7 21z" fill="none" stroke="#2ad366" strokeWidth="2.300" />
          <path d="M8 6l2 0 1 3-1 1.500c1 2 2 3 4 3.500l1.500-1.500 3 1.500c0 3-3 4-5 3-4-1-7-5-7-8 0-2 1-3 1.500-3z" fill="#2ad366" />
        </Task>
        <Task label="FileZilla">
          <path d="M0 0h24v24H0z" fill="#b00808" />
          <path d="M6 19L8.500 4H18M7.500 11H14M13 12h7l-7 8h7" fill="none" stroke="#fff" strokeWidth="3" />
        </Task>
        <Task label="Explorer" open>
          <path d="M1 3h8l2 3h12v16H1z" fill="#e7a51f" />
          <path d="M1 7h22v14H1z" fill="#fbd669" />
          <path d="M5 13h14v8h-4v-4H9v4H5z" fill="#3f8ed8" />
        </Task>
        <Task label="Telegram">
          <circle cx="12" cy="12" r="10.500" fill="#2ba0dc" />
          <path d="M5 11.500l13-5-2.500 12-4-3-2 2v-3.500l6-5-8 4.500z" fill="#fff" />
        </Task>
        <Task label="PDF">
          <path d="M2 9l5-5 15-1v16H3v-8z" fill="#f5e313" />
          <path d="M1 9c3-7 7-7 12-6" fill="none" stroke="#171717" strokeWidth="2" />
          <text x="12.500" y="16" textAnchor="middle" fontSize="8" fontWeight="900" fontFamily="Roboto" fill="#111">PDF</text>
        </Task>
        <Task label="Reaper">
          <path d="M2 5c5-5 15-5 20 0l-6 3C10 4 6 3 2 5z" fill="#3e9ed0" />
          <path d="M2 5c5-1 10 1 11 6v12C6 22 0 13 2 5z" fill="#5aa93c" />
          <path d="M22 5c2 8-3 16-9 18 1-6 0-14-5-17 5-1 10 0 14-1z" fill="#c8604f" />
          <path d="M4 3c7 1 11 6 11 14" fill="none" stroke="#e7eef0" strokeWidth="1.500" />
        </Task>
        <Task label="FL Studio" current>
          <circle cx="12" cy="12" r="11" fill="#2b2f32" />
          <path d="M8 8c4-3 9-1 9 3 0 5-4 10-8 10-4-2-4-9-1-13z" fill="#f5761a" />
          <path d="M9 9c2-1 3 0 2 3l-2 6c-2-1-2-6 0-9z" fill="#ffb257" />
          <path d="M7 7l4-2-2-4 4 3 4-3v3l4 1-4 3-4-1-3 2z" fill="#6fbb36" />
        </Task>
        <Task label="Window" open>
          <path d="M1 3h22v18H1z" fill="#eceeee" />
          <path d="M3 6h9v12H3z" fill="#4d9a8a" />
          <path d="M14 8h5M14 12h5M14 16h5M20 6v7" stroke="#9aa4aa" strokeWidth="1.500" />
        </Task>
      </div>
      <div className="ml-auto flex items-center text-[12px]">
        <div className="flex gap-[7px] pr-[9px]">
          <Icon className="size-[17px]"><path strokeWidth="2" d="M3 16l9-9 9 9" /></Icon>
          <Icon className="size-[17px]"><path strokeWidth="2" d="M7 8V1h9v7M5 8h13v8M5 8v15h9" /><path strokeWidth="2" stroke="#9fb0a8" d="M13 19l3 3 6-7" /></Icon>
          <Icon className="size-[17px]"><path fill="#3d78d8" stroke="#a8c6ef" d="M1 4h10v14H1z" /><rect x="9" y="2" width="14" height="20" rx="6" fill="#2fa84a" stroke="#c8efcf" /><path stroke="#fff" strokeWidth="2" d="M16 3v9" /></Icon>
          <Icon className="size-[17px]"><circle cx="12" cy="12" r="11" fill="#2a2523" stroke="none" /><path stroke="#e0703a" strokeWidth="1.600" d="M9 9H3l-1 5h6M3 11.500h5M16 9h-5l-1 2.500h5l-1 2.500H9M17 9h5M22 9l-1 5M17 11.500h5" /></Icon>
          <Icon className="size-[17px]"><path fill="#e9e9e9" stroke="#fff" d="M3 19C2 10 12 3 22 5c-1 8-10 15-19 14z" /><path stroke="#1a1a1a" strokeWidth="3" d="M8 14c2-3 5-5 9-6" /></Icon>
          <Icon className="size-[17px]"><path strokeWidth="1.800" d="M10 22c0-6 5-10 11-11M14 22c0-4 3-6 7-7" /><path stroke="#9aa5aa" d="M2 22C2 11 10 4 21 3M6 22C6 13 12 8 21 7" /><circle {...fill} cx="20" cy="20" r="2.500" /></Icon>
          <Icon className="size-[17px]"><path strokeWidth="1.800" d="M1 9h4l6-6v18l-6-6H1zM14 9c2 2 2 4 0 6" /><path stroke="#9aa5aa" strokeWidth="1.800" d="M17 6c4 4 4 8 0 12M20 3c5 6 5 12 0 18" /></Icon>
        </div>
        <span className="w-[26px]">ENG</span>
        <div className="w-[76px] text-center text-[11px] leading-[18px]">
          <p>18:00</p>
          <p>19.04.2025</p>
        </div>
        <div className="relative mx-[7px] w-[28px]">
          <Icon className="size-4"><path {...fill} d="M0 2h24v17H11l-5 5v-5H0z" /><path stroke="#24333b" strokeWidth="2" d="M4 7h16M4 11h16M4 15h10" /></Icon>
          <span className="absolute top-1.5 left-[7px] flex size-[17px] items-center justify-center rounded-full border border-[#8c8c8c] bg-[#2b2b2b] text-[11px] leading-none">1</span>
        </div>
        <span className="mr-[5px] h-full w-px bg-[#6f7d83]" />
      </div>
    </footer>
  );
}

export default function App() {
  return (
    <div className="flex h-screen flex-col overflow-hidden bg-[#4b545b] whitespace-nowrap">
      <Toolbar />
      <main className="flex min-h-0 flex-1">
        <Browser />
        <div className="flex w-[7px] shrink-0 items-center justify-center border-r border-[#343b41] bg-[#4a535a]">
          <span className="h-5 border-l-2 border-dotted border-[#2e363b]" />
        </div>
        <div className="flex w-[499px] shrink-0 flex-col bg-linear-to-br from-[#5c646a] via-[#666e75] to-[#656d74]">
          <ChannelRack />
        </div>
        <Playlist />
      </main>
      <Taskbar />
    </div>
  );
}
